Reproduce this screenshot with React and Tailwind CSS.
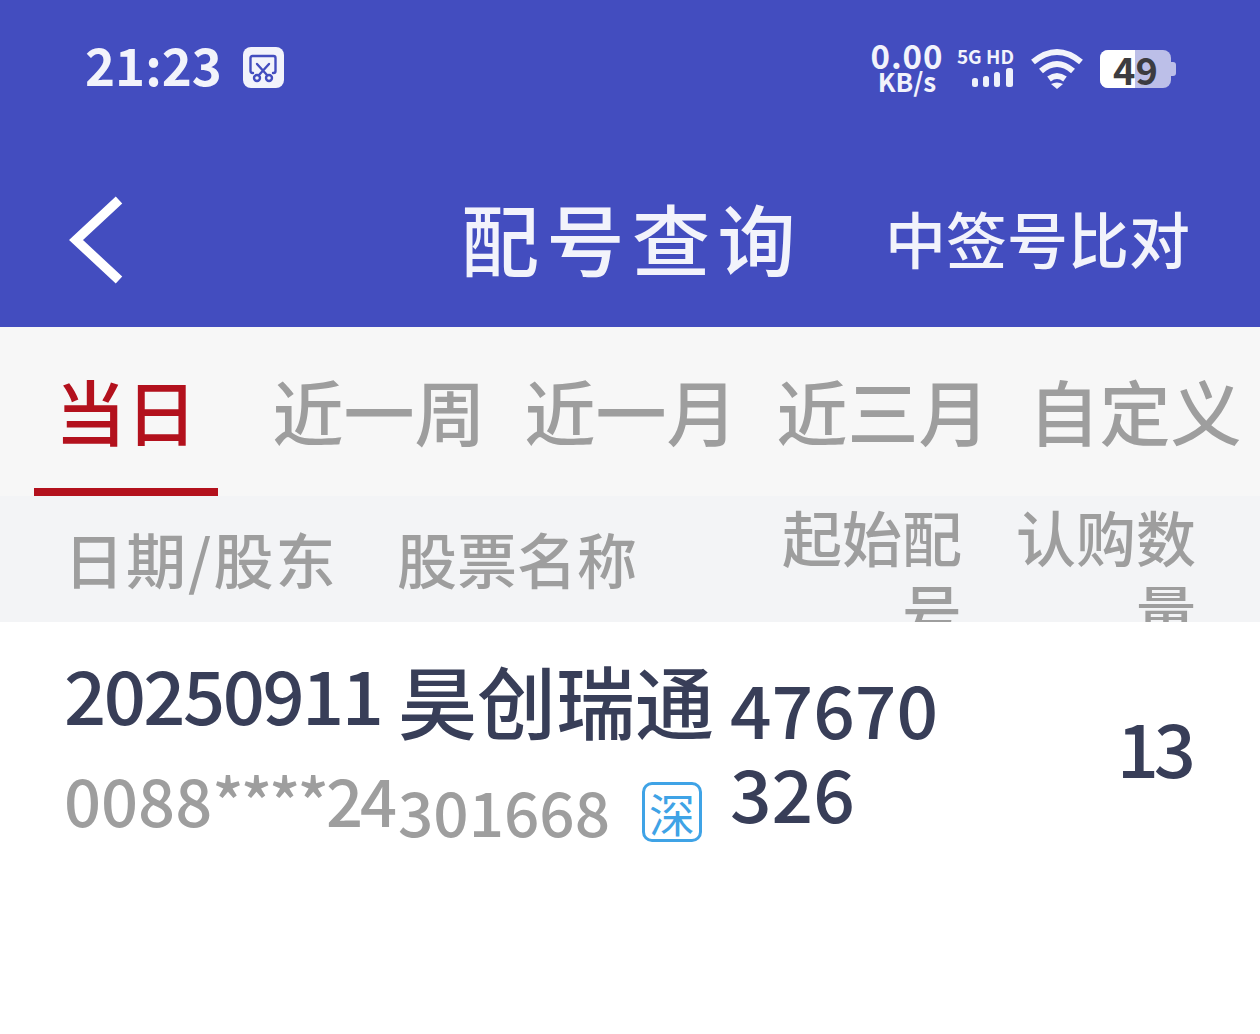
import React from "react";

const FONT = "font-['Noto_Sans_CJK_SC','Noto_Sans',sans-serif]";

function ScreenshotIcon() {
  return (
    <div className="flex h-[41px] w-[41px] items-center justify-center rounded-[8px] bg-[#f2f3fb]">
      <svg width="30" height="30" viewBox="0 0 30 30" fill="none" stroke="#434dbf" strokeWidth="2.4" strokeLinecap="round">
        <path d="M5 20 H4.5 Q2.5 20 2.5 18 V5 Q2.5 3 4.5 3 H25.5 Q27.5 3 27.5 5 V18 Q27.5 20 25.5 20 H25" />
        <path d="M9 11 L19 22 M21 11 L11 22" />
        <circle cx="9" cy="25" r="3" />
        <circle cx="21" cy="25" r="3" />
      </svg>
    </div>
  );
}

function SignalBars() {
  return (
    <svg width="42" height="20" viewBox="0 0 42 20" fill="#eef0fa">
      <rect x="0" y="10" width="6" height="9" rx="2.5" />
      <rect x="11" y="8" width="6" height="11" rx="2.5" />
      <rect x="22" y="4" width="6" height="15" rx="2.5" />
      <rect x="34" y="0" width="7" height="19" rx="2.5" />
    </svg>
  );
}

function WifiIcon() {
  return (
    <svg width="52" height="42" viewBox="0 0 52 42" fill="none" stroke="#f2f3fb" strokeWidth="6">
      <path d="M2 14 Q26 -6 50 14" />
      <path d="M10 23 Q26 9 42 23" />
      <path d="M18 31 Q26 25 34 31" />
      <path d="M26 41 L20 36 Q26 33 32 36 Z" fill="#f2f3fb" stroke="none" />
    </svg>
  );
}

function Battery() {
  return (
    <div className="flex items-center">
      <div className="relative flex h-[38px] w-[71px] items-center justify-center overflow-hidden rounded-[8px] bg-[#bcbfe8]">
        <div className="absolute inset-y-0 left-0 w-[35px] bg-white" />
        <span className="relative text-[38px] font-bold leading-none text-[#3c3c40]">49</span>
      </div>
      <div className="h-[14px] w-[5px] rounded-r-[3px] bg-[#bcbfe8]" />
    </div>
  );
}

function StatusBar() {
  return (
    <div className="flex h-[135px] items-center justify-between pl-[85px] pr-[84px] text-[#f2f3fb]">
      <div className="flex items-center gap-[21px]">
        <span className="mb-[6px] text-[51px] font-bold leading-none">21:23</span>
        <ScreenshotIcon />
      </div>
      <div className="flex items-center">
        <div className="flex w-[74px] flex-col items-center font-bold leading-none">
          <span className="text-[33px] leading-[26px] tracking-[1px]">0.00</span>
          <span className="text-[26px] leading-[26px]">KB/s</span>
        </div>
        <div className="mb-[4px] ml-[12px] flex w-[58px] flex-col items-end">
          <span className="whitespace-nowrap text-[19px] font-bold leading-[24px]">5G HD</span>
          <SignalBars />
        </div>
        <div className="ml-[17px] mt-[2px]">
          <WifiIcon />
        </div>
        <div className="ml-[17px] mt-[2px]">
          <Battery />
        </div>
      </div>
    </div>
  );
}

function TitleBar() {
  return (
    <div className="flex h-[192px] items-center pl-[66px] pr-[70px] pt-[18px] text-[#f2f3fb]">
      <svg width="60" height="92" viewBox="0 0 60 92" fill="none" stroke="#ffffff" strokeWidth="9.5">
        <path d="M53 6 L10 46 L53 86" />
      </svg>
      <span className="mb-[6px] ml-[335px] text-[78px] font-medium leading-none tracking-[7.5px]">配号查询</span>
      <span className="mb-[6px] ml-auto text-[61px] font-medium leading-none">中签号比对</span>
    </div>
  );
}

function Tabs() {
  const tabs = ["近一周", "近一月", "近三月", "自定义"];
  return (
    <div className="flex h-[169px] items-stretch bg-[#f7f7f7] pl-[34px] text-[71px] font-medium leading-none text-[#9e9e9e]">
      <div className="flex w-[184px] items-center justify-center border-b-[8px] border-[#b3111d] pt-[4px] text-[#b3111d]">
        当日
      </div>
      <div className="ml-[58px] flex gap-[46px] pb-[8px] pt-[4px]">
        {tabs.map((t) => (
          <div key={t} className="flex w-[206px] items-center justify-center whitespace-nowrap">
            {t}
          </div>
        ))}
      </div>
    </div>
  );
}

function TableHead() {
  return (
    <div className="grid h-[126px] grid-cols-[333px_335px_230px_234px] overflow-hidden bg-[#f3f4f6] pl-[64px] text-[60px] font-medium leading-[74px] text-[#9e9e9e]">
      <div className="mb-[28px] self-center whitespace-nowrap tracking-[2px]">日期/股东</div>
      <div className="mb-[28px] self-center whitespace-nowrap">股票名称</div>
      <div className="pt-[3px] text-right">起始配号</div>
      <div className="pt-[3px] text-right">认购数量</div>
    </div>
  );
}

function TableRow() {
  return (
    <div className="grid grid-cols-[334px_332px_230px_236px] pl-[64px] font-medium">
      <div className="flex flex-col pt-[23px]">
        <span className="whitespace-nowrap text-[74px] leading-[96px] tracking-[-2.5px] text-[#383e58]">20250911</span>
        <span className="whitespace-nowrap pt-[18px] text-[65px] leading-[80px] text-[#9e9e9e]">
          0088<span className="tracking-[-3px]">****24</span>
        </span>
      </div>
      <div className="flex flex-col pt-[25px]">
        <span className="whitespace-nowrap text-[79px] leading-[106px] text-[#383e58]">昊创瑞通</span>
        <div className="flex items-center pt-[18px]">
          <span className="text-[62px] leading-[78px] text-[#9e9e9e]">301668</span>
          <span className="ml-[32px] mt-[4px] flex h-[60px] w-[60px] items-center justify-center rounded-[10px] border-[3px] border-[#3fa3e6] text-[46px] font-normal leading-none text-[#3fa3e6]">
            深
          </span>
        </div>
      </div>
      <div className="pt-[43px] text-[73px] leading-[84px] text-[#383e58]">47670 326</div>
      <div className="flex items-center justify-end pt-[20px] text-[74px] leading-none text-[#383e58]">
        <span>
          <span className="tracking-[-5px]">1</span>3
        </span>
      </div>
    </div>
  );
}

export default function App() {
  return (
    <div className={`h-[1034px] w-[1260px] overflow-hidden bg-white ${FONT}`}>
      <div className="bg-[#434dbf]">
        <StatusBar />
        <TitleBar />
      </div>
      <Tabs />
      <TableHead />
      <TableRow />
    </div>
  );
}
